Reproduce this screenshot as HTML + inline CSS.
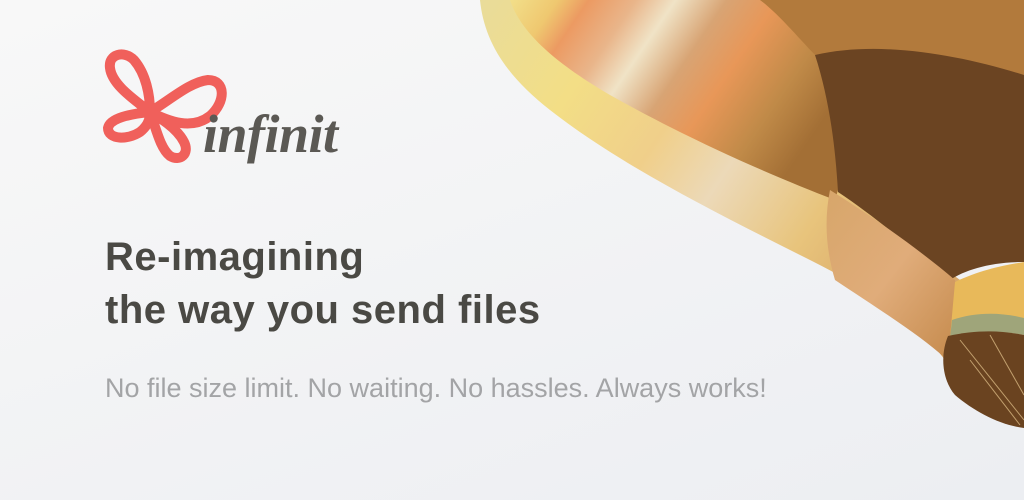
<!DOCTYPE html>
<html><head><meta charset="utf-8"><style>
html,body{margin:0;padding:0;}
body{width:1024px;height:500px;overflow:hidden;position:relative;background:linear-gradient(160deg,#f8f8f8 0%,#f1f2f4 60%,#eceef2 100%);font-family:"Liberation Sans",sans-serif;}
.h{position:absolute;left:105px;font-weight:bold;font-size:40px;color:#4a4944;letter-spacing:0.5px;white-space:nowrap;}
.sub{position:absolute;left:105px;top:373px;font-size:27px;color:#a3a4a6;white-space:nowrap;}
.logo{position:absolute;left:0;top:0;}
.word{position:absolute;left:203px;top:103px;font-family:"Liberation Serif",serif;font-style:italic;font-weight:bold;font-size:54px;color:#5b5954;letter-spacing:-0.5px;}
</style></head><body>
<svg width="1024" height="500" style="position:absolute;left:0;top:0">
<defs>
<linearGradient id="b1" x1="0" y1="0" x2="1" y2="0.4">
<stop offset="0" stop-color="#f2df8a"/><stop offset="0.12" stop-color="#efc870"/>
<stop offset="0.2" stop-color="#ec9a62"/><stop offset="0.32" stop-color="#e9b58a"/>
<stop offset="0.42" stop-color="#f0e3c6"/><stop offset="0.55" stop-color="#d8a474"/>
<stop offset="0.68" stop-color="#e89758"/><stop offset="0.85" stop-color="#c08a48"/>
<stop offset="1" stop-color="#a36f35"/></linearGradient>
<linearGradient id="b2" x1="0" y1="0" x2="1" y2="0.5">
<stop offset="0" stop-color="#e9dc9a"/><stop offset="0.25" stop-color="#f3de86"/>
<stop offset="0.45" stop-color="#f0cf8a"/><stop offset="0.6" stop-color="#ecd9b8"/>
<stop offset="0.8" stop-color="#e8c47c"/><stop offset="1" stop-color="#d9a868"/></linearGradient>
<linearGradient id="sk" x1="0" y1="0" x2="1" y2="1">
<stop offset="0" stop-color="#d7a66a"/><stop offset="0.5" stop-color="#e0ac7a"/><stop offset="1" stop-color="#c58a4c"/></linearGradient>
</defs>
<path d="M480,0 C484,40 505,75 550,110 C620,165 720,215 810,260 C870,290 915,320 945,360 L960,280 L840,190 L820,0 Z" fill="url(#b2)"/>
<path d="M510,0 C520,30 550,60 610,95 C690,140 770,175 835,200 L850,150 L820,0 Z" fill="url(#b1)"/>
<path d="M760,0 L1024,0 L1024,80 C960,60 880,40 820,60 C800,40 780,15 760,0Z" fill="#b27a3c"/>
<path d="M815,55 C880,40 960,55 1024,75 L1024,262 C990,262 965,270 950,280 C920,255 880,220 838,192 C835,140 828,95 815,55 Z" fill="#6b4422"/>
<path d="M830,190 C870,215 920,250 955,280 C960,300 955,330 945,358 C920,335 880,310 835,280 C826,250 824,220 830,190 Z" fill="url(#sk)"/>
<path d="M955,282 C980,270 1005,265 1024,262 L1024,335 C1000,330 970,332 950,338 Z" fill="#e8b95a"/>
<path d="M952,320 C975,312 1000,312 1024,318 L1024,335 C1000,330 970,332 950,338 Z" fill="#9fa57a"/>
<path d="M948,336 C975,330 1000,330 1024,335 L1024,428 C1000,425 975,412 955,395 C942,380 940,355 948,336 Z" fill="#6a4320"/>
<g stroke="#e8c890" stroke-width="1" opacity="0.7"><line x1="960" y1="340" x2="1024" y2="420"/><line x1="990" y1="335" x2="1024" y2="395"/><line x1="970" y1="360" x2="1020" y2="425"/></g>
</svg>
<svg class="logo" width="240" height="180">
<g fill="none" stroke="#f0605b" stroke-width="10" stroke-linecap="round">
<path d="M150,112 C135,100 112,85 110,68 C108,54 124,50 134,60 C146,74 150,95 150,112"/>
<path d="M150,112 C170,100 190,82 208,80 C226,80 226,102 210,116 C192,130 170,122 150,112"/>
<path d="M150,112 C130,114 110,118 108,128 C108,140 128,140 140,132 C150,124 150,116 150,112"/>
<path d="M150,112 C156,128 160,148 170,156 C180,162 190,154 184,142 C178,130 164,120 150,112"/>
</g></svg>
<div class="word">infinit</div>
<div class="h" style="top:235px">Re-imagining</div>
<div class="h" style="top:288px">the way you send files</div>
<div class="sub">No file size limit. No waiting. No hassles. Always works!</div>
</body></html>
